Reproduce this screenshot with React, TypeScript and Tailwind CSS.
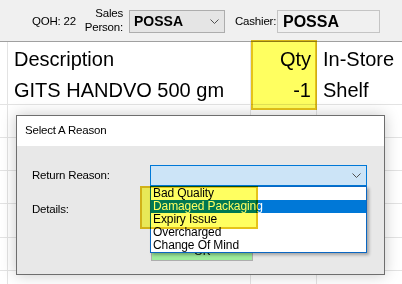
import React from "react";

function Chevron({ className = "" }: { className?: string }) {
  return (
    <svg width="9" height="5" viewBox="0 0 9 5" className={className}>
      <polyline points="0.5,0.5 4.5,4.5 8.5,0.5" fill="none" stroke="#505050" strokeWidth="1" />
    </svg>
  );
}

function GridRow({ h, border = true, desc, qty, store }: { h: string; border?: boolean; desc?: string; qty?: string; store?: string }) {
  return (
    <div className={`flex ${h} ${border ? "border-b border-[#e3e3e3]" : ""} text-[20px]`}>
      <div className="w-[8px] border-r border-[#e3e3e3]" />
      <div className="w-[243px] border-r border-[#e3e3e3] flex items-center pl-[6px]">{desc}</div>
      <div className="w-[66px] border-r border-[#e3e3e3] flex items-center justify-end pr-[5px]">{qty}</div>
      <div className="flex-1 flex items-center pl-[6px] whitespace-nowrap">{store}</div>
    </div>
  );
}

const reasons = ["Bad Quality", "Damaged Packaging", "Expiry Issue", "Overcharged", "Change Of Mind"];

export default function App() {
  return (
    <div className="relative w-[402px] h-[284px] overflow-hidden bg-white text-black font-['Liberation_Sans',Arial,sans-serif]">
      {/* Toolbar */}
      <div className="flex items-start h-[42px] bg-[#f0f0f0] border-b border-[#a0a0a0] text-[11.5px] tracking-[-0.2px] pl-[32px]">
        <span className="w-[48px] mt-[14px] leading-[14px] whitespace-nowrap">QOH: 22</span>
        <div className="w-[43px] mt-[6px] text-right leading-[14px]">
          Sales
          <br />
          Person:
        </div>
        <div className="ml-[6px] mt-[10px] w-[96px] h-[23px] border border-[#adadad] bg-[#e5e5e5] flex items-center justify-between pl-[4px] pr-[5px] tracking-normal">
          <span className="text-[14px] font-bold">POSSA</span>
          <Chevron />
        </div>
        <span className="ml-[10px] mt-[14px] w-[42px] leading-[14px] whitespace-nowrap">Cashier:</span>
        <div className="mt-[10px] w-[103px] h-[23px] border border-[#c4c4c4] bg-[#f0f0f0] flex items-center pl-[5px] tracking-normal">
          <span className="text-[16px] font-bold">POSSA</span>
        </div>
      </div>

      {/* Grid */}
      <div className="flex flex-col">
        <GridRow h="h-[33px]" border={false} desc="Description" qty="Qty" store="In-Store" />
        <GridRow h="h-[30px]" desc="GITS HANDVO 500 gm" qty="-1" store="Shelf" />
        <GridRow h="h-[33px]" />
        <GridRow h="h-[33px]" />
        <GridRow h="h-[33px]" />
        <GridRow h="h-[34px]" />
        <GridRow h="h-[33px]" />
        <GridRow h="h-[33px]" />
      </div>

      {/* Qty highlight */}
      <div className="absolute left-[251px] top-[40px] w-[66px] h-[70px] bg-[#ffff60] border-2 border-[#e6c31a] mix-blend-multiply" />

      {/* Dialog */}
      <div className="absolute left-[16px] top-[115px] w-[369px] h-[160px] border border-[#6e6e6e] bg-[#e8e8e8] flex flex-col text-[11.5px] tracking-[-0.2px] shadow-[0_0_14px_rgba(0,0,0,0.22)]">
        <div className="h-[30px] bg-white flex items-center pl-[8px]">Select A Reason</div>
        <div className="flex-1 flex flex-col pl-[15px] pt-[19px]">
          <div className="flex items-center h-[21px]">
            <span className="w-[118px]">Return Reason:</span>
            <div className="w-[217px] h-[21px] border border-[#0078d7] bg-[#cce4f7] flex items-center justify-end pr-[5px]">
              <Chevron />
            </div>
          </div>
          <div className="mt-[14px] h-[20px] flex items-center">Details:</div>
          <div className="ml-[119px] mt-[20px] w-[102px] h-[21px] border border-[#adadad] bg-[#9cec9c] flex items-end justify-center leading-[12px] pb-[3px]">
            OK
          </div>
        </div>
      </div>

      {/* Dropdown list */}
      <div className="absolute left-[150px] top-[186px] w-[217px] border border-[#0a66c2] bg-white text-[12px] tracking-[-0.1px] shadow-[2px_2px_3px_rgba(0,0,0,0.3)]">
        {reasons.map((r, i) => (
          <div
            key={r}
            className={`h-[13px] leading-[13px] pl-[2px] ${i === 1 ? "bg-[#0078d7] text-white" : ""}`}
          >
            {r}
          </div>
        ))}
      </div>

      {/* Reason highlight */}
      <div className="absolute left-[140px] top-[186px] w-[118px] h-[43px] bg-[#ffff60] border-2 border-[#e6c31a] mix-blend-multiply" />
    </div>
  );
}
